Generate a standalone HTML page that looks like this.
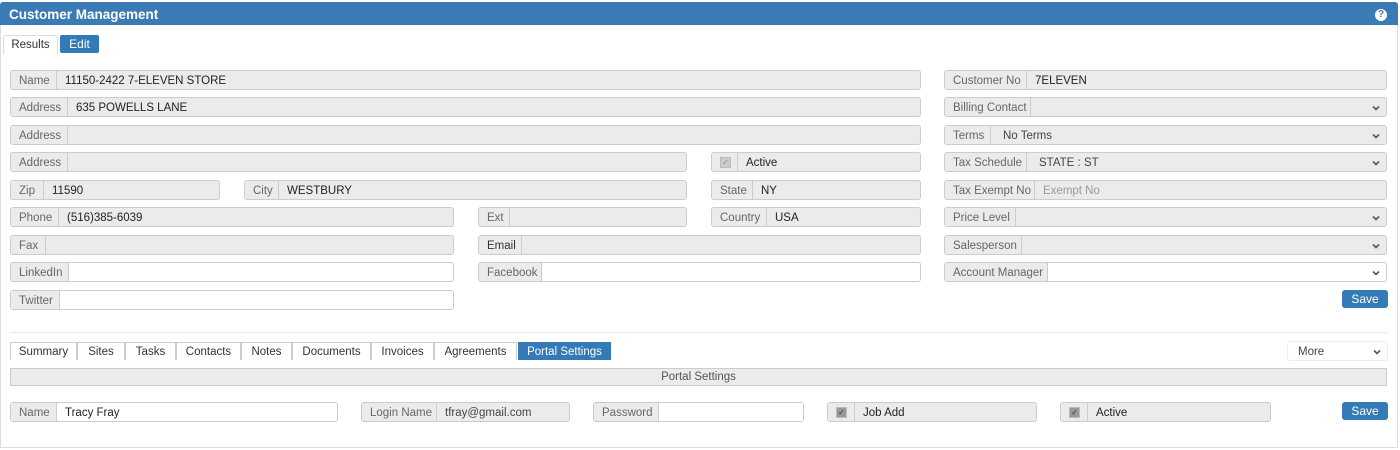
<!DOCTYPE html>
<html><head><meta charset="utf-8"><style>
*{box-sizing:border-box;margin:0;padding:0}
body{width:1400px;height:450px;background:#fff;font-family:"Liberation Sans",Arial,sans-serif;font-size:11.5px;color:#333;position:relative;overflow:hidden}
.hdr{position:absolute;left:0;top:2px;width:1398px;height:23px;background:#3a7ab5;color:#fff;font-weight:bold;font-size:13.5px;line-height:25px;padding-left:9px;border-radius:3px 3px 0 0}
.help{position:absolute;left:1375px;top:9px;width:12px;height:12px;border-radius:50%;background:#fff;color:#3a7ab5;font-size:10px;font-weight:bold;line-height:12px;text-align:center}
.frame{position:absolute;left:0;top:25px;width:1398px;height:423px;border:1px solid #ddd;border-top:none}
.f{position:absolute;height:20px;border:1px solid #ccc;border-radius:3px;background:#ebebeb;line-height:21px;white-space:nowrap;overflow:hidden}
.f.w{background:#fff}
.l{position:absolute;left:0;top:0;height:18px;background:#ebebeb;border-right:1px solid #ccc;color:#666;padding-left:8px}
.v{position:absolute;top:0;padding-left:8px;color:#222}
.v.g{color:#999}
.ar{position:absolute;right:6px;top:7px;width:8px;height:6px}
.cb{position:absolute;left:8px;top:4px;width:11px;height:11px;background:#ccc;border:1px solid #bbb;font-size:8px;line-height:9px;text-align:center;color:#888}
.cb.d{background:#999;color:#333}
.btn{position:absolute;background:#337ab7;color:#fff;border-radius:3px;text-align:center;font-size:12px;line-height:19px;height:18px}
.tab{position:absolute;top:342px;height:18px;border:1px solid #ccc;border-bottom:none;line-height:19px;text-align:center;background:#fff;color:#333}
</style></head><body>
<div class="hdr">Customer Management</div><div class="help">?</div>
<div class="frame"></div>
<div style="position:absolute;left:3px;top:35px;width:55px;height:19px;border:1px solid #ddd;border-bottom:none;border-radius:3px 3px 0 0;text-align:center;line-height:19px">Results</div>
<div class="btn" style="left:60px;top:35px;width:39px;height:18px;border-radius:2px">Edit</div>

<svg width="0" height="0" style="position:absolute"><defs><symbol id="c" viewBox="0 0 8 6"><path d="M1 1.5L4 4.5L7 1.5" fill="none" stroke="#555" stroke-width="1.6"/></symbol></defs></svg>

<div class="f" style="left:10px;top:70px;width:911px"><div class="l" style="width:46px">Name</div><div class="v" style="left:46px">11150-2422 7-ELEVEN STORE</div></div>
<div class="f" style="left:10px;top:97px;width:911px"><div class="l" style="width:57px">Address</div><div class="v" style="left:57px">635 POWELLS LANE</div></div>
<div class="f" style="left:10px;top:125px;width:911px"><div class="l" style="width:57px">Address</div></div>
<div class="f" style="left:10px;top:152px;width:677px"><div class="l" style="width:57px">Address</div></div>
<div class="f" style="left:711px;top:152px;width:210px"><div class="l" style="width:26px"></div><div class="cb">✓</div><div class="v" style="left:26px">Active</div></div>
<div class="f" style="left:10px;top:180px;width:210px"><div class="l" style="width:33px">Zip</div><div class="v" style="left:33px">11590</div></div>
<div class="f" style="left:244px;top:180px;width:443px"><div class="l" style="width:34px">City</div><div class="v" style="left:34px">WESTBURY</div></div>
<div class="f" style="left:711px;top:180px;width:210px"><div class="l" style="width:41px">State</div><div class="v" style="left:41px">NY</div></div>
<div class="f" style="left:10px;top:207px;width:444px"><div class="l" style="width:48px">Phone</div><div class="v" style="left:48px">(516)385-6039</div></div>
<div class="f" style="left:478px;top:207px;width:209px"><div class="l" style="width:31px">Ext</div></div>
<div class="f" style="left:711px;top:207px;width:210px"><div class="l" style="width:55px">Country</div><div class="v" style="left:55px">USA</div></div>
<div class="f" style="left:10px;top:235px;width:444px"><div class="l" style="width:35px">Fax</div></div>
<div class="f" style="left:478px;top:235px;width:443px"><div class="l" style="width:43px;color:#333">Email</div></div>
<div class="f w" style="left:10px;top:262px;width:444px"><div class="l" style="width:58px">LinkedIn</div></div>
<div class="f w" style="left:478px;top:262px;width:443px"><div class="l" style="width:63px">Facebook</div></div>
<div class="f w" style="left:10px;top:290px;width:444px"><div class="l" style="width:49px">Twitter</div></div>

<div class="f" style="left:944px;top:70px;width:443px"><div class="l" style="width:82px">Customer No</div><div class="v" style="left:82px">7ELEVEN</div></div>
<div class="f" style="left:944px;top:97px;width:443px"><div class="l" style="width:86px">Billing Contact</div><svg class="ar"><use href="#c"/></svg></div>
<div class="f" style="left:944px;top:125px;width:443px"><div class="l" style="width:46px">Terms</div><div class="v" style="left:50px;color:#444">No Terms</div><svg class="ar"><use href="#c"/></svg></div>
<div class="f" style="left:944px;top:152px;width:443px"><div class="l" style="width:82px">Tax Schedule</div><div class="v" style="left:86px;color:#444">STATE : ST</div><svg class="ar"><use href="#c"/></svg></div>
<div class="f" style="left:944px;top:180px;width:443px"><div class="l" style="width:90px">Tax Exempt No</div><div class="v g" style="left:90px">Exempt No</div></div>
<div class="f" style="left:944px;top:207px;width:443px"><div class="l" style="width:71px">Price Level</div><svg class="ar"><use href="#c"/></svg></div>
<div class="f" style="left:944px;top:235px;width:443px"><div class="l" style="width:77px">Salesperson</div><svg class="ar"><use href="#c"/></svg></div>
<div class="f w" style="left:944px;top:262px;width:443px"><div class="l" style="width:103px">Account Manager</div><svg class="ar"><use href="#c"/></svg></div>
<div class="btn" style="left:1342px;top:290px;width:46px">Save</div>

<div style="position:absolute;left:10px;top:332px;width:1377px;height:1px;background:#e8e8e8"></div>
<div class="tab" style="left:10px;width:67px">Summary</div>
<div class="tab" style="left:77px;width:48px">Sites</div>
<div class="tab" style="left:125px;width:51px">Tasks</div>
<div class="tab" style="left:176px;width:65px">Contacts</div>
<div class="tab" style="left:241px;width:51px">Notes</div>
<div class="tab" style="left:292px;width:79px">Documents</div>
<div class="tab" style="left:371px;width:63px">Invoices</div>
<div class="tab" style="left:434px;width:83px">Agreements</div>
<div class="tab" style="left:518px;width:93px;background:#337ab7;color:#fff;border-color:#337ab7">Portal Settings</div>
<div style="position:absolute;left:1287px;top:341px;width:101px;height:20px;border:1px solid #eee;border-radius:3px;line-height:20px;padding-left:10px;color:#444">More<svg class="ar" style="top:7px"><use href="#c"/></svg></div>
<div style="position:absolute;left:10px;top:368px;width:1377px;height:18px;background:#ebebeb;border:1px solid #ccc;text-align:center;line-height:17px;color:#555">Portal Settings</div>

<div class="f w" style="left:10px;top:402px;width:328px"><div class="l" style="width:46px">Name</div><div class="v" style="left:46px">Tracy Fray</div></div>
<div class="f" style="left:361px;top:402px;width:209px"><div class="l" style="width:75px">Login Name</div><div class="v" style="left:75px;color:#444">tfray@gmail.com</div></div>
<div class="f w" style="left:593px;top:402px;width:211px"><div class="l" style="width:65px">Password</div></div>
<div class="f" style="left:827px;top:402px;width:210px"><div class="l" style="width:27px"></div><div class="cb d">✓</div><div class="v" style="left:27px">Job Add</div></div>
<div class="f" style="left:1060px;top:402px;width:211px"><div class="l" style="width:27px"></div><div class="cb d">✓</div><div class="v" style="left:27px">Active</div></div>
<div class="btn" style="left:1342px;top:402px;width:46px">Save</div>
</body></html>
